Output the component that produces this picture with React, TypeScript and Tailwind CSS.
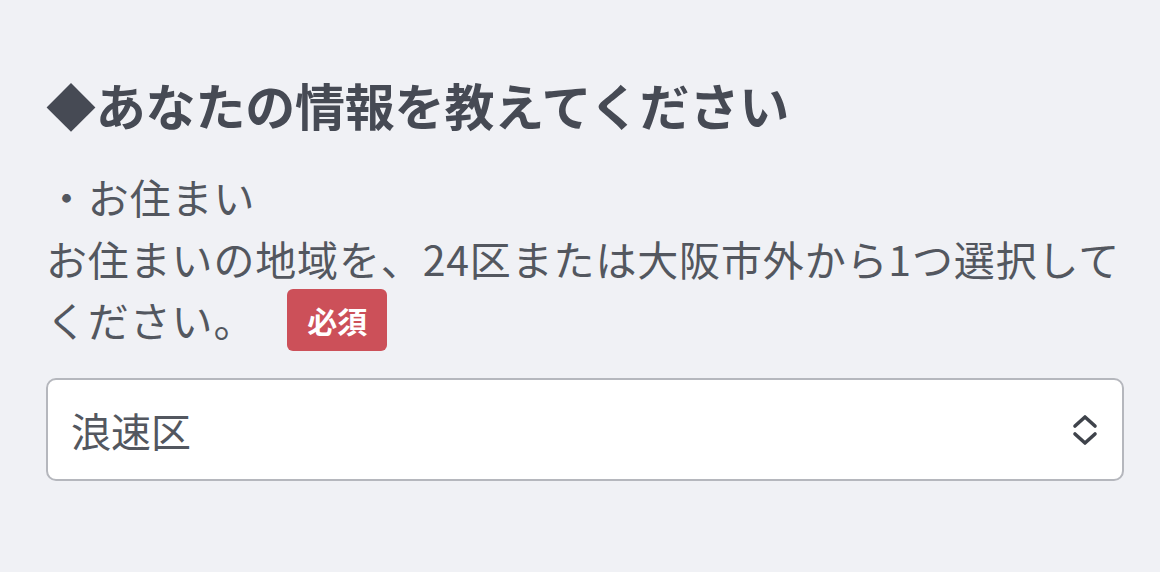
import React from 'react';

const jp = { fontFamily: '"Noto Sans CJK JP", "Noto Sans", sans-serif' };

export default function App() {
  return (
    <div className="min-h-screen w-full bg-[#f0f1f5] pl-[46px] pt-[67px]" style={jp}>
      <h2 className="text-[50px] leading-[75px] font-bold text-[#464a54] tracking-[-0.2px]">
        ◆あなたの情報を教えてください
      </h2>

      <div className="mt-[24px] w-[1082px] text-[41px] leading-[61.5px] text-[#53575f] tracking-[0.85px]">
        <p>・お住まい</p>
        <p>
          お住まいの地域を、24区または大阪市外から1つ選択してください。
          <span className="ml-[32px] inline-flex h-[62px] items-center rounded-[6px] bg-[#cc5059] px-[20px] align-top text-[30px] font-bold leading-none tracking-normal text-white">
            必須
          </span>
        </p>
      </div>

      <div className="mt-[27px] flex h-[103px] w-[1078px] items-center justify-between rounded-[10px] border-2 border-[#b5b7bd] bg-white pl-[23px] pr-[22px]">
        <span className="text-[40px] text-[#53575f]">浪速区</span>
        <svg width="30" height="34" viewBox="0 0 30 34" fill="none" stroke="#3f434b" strokeWidth="3.6" strokeLinecap="round" strokeLinejoin="round">
          <path d="M5 13 L15 4 L25 13" />
          <path d="M5 21 L15 30 L25 21" />
        </svg>
      </div>
    </div>
  );
}
